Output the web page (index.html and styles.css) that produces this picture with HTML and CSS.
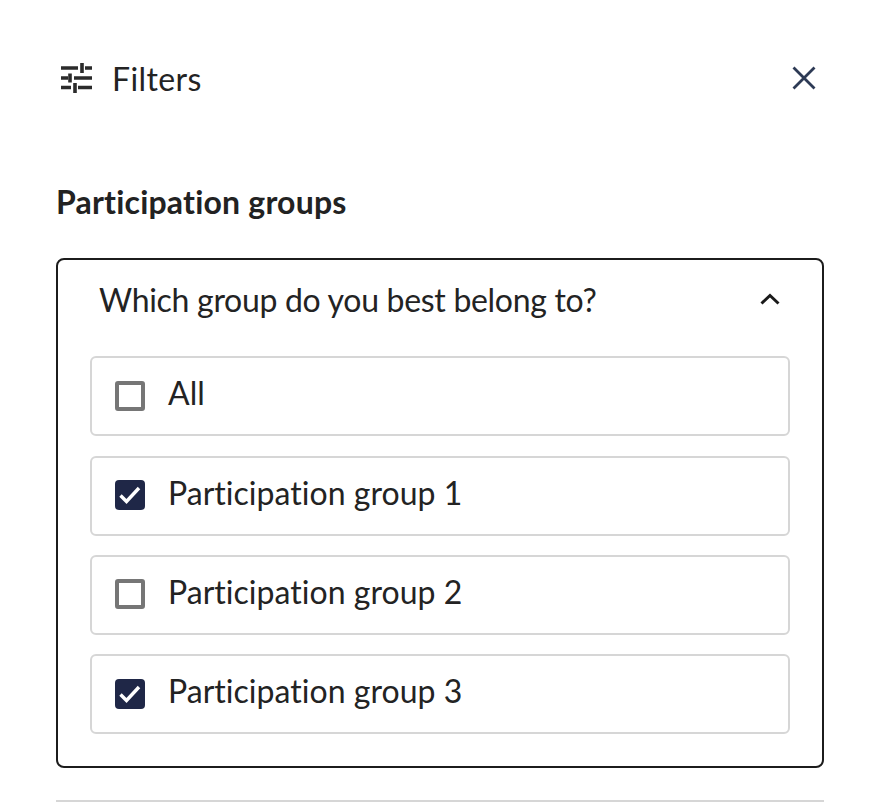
FILE: index.html
```html
<!DOCTYPE html>
<html lang="en">
<head>
<meta charset="utf-8">
<title>Filters</title>
<link rel="stylesheet" href="styles.css">
</head>
<body>
<main class="panel">
  <header class="panel-header">
    <div class="panel-title">
      <svg class="icon-filter" viewBox="0 0 32 32" aria-hidden="true">
        <path d="M1 6H18M25 6H32M22 1V11M1 16H8M14 16H32M10 11.5V20.5M1 25.5H11M18 25.5H32M15 21V31" fill="none" stroke="#2b2b2b" stroke-width="3.6"/>
      </svg>
      <span>Filters</span>
    </div>
    <svg class="icon-close" viewBox="0 0 24 24" aria-hidden="true">
      <path d="M1.5 1.5L22.5 22.5M22.5 1.5L1.5 22.5" fill="none" stroke="#2d3a55" stroke-width="2.8"/>
    </svg>
  </header>
  <h2 class="section-title">Participation groups</h2>
  <section class="accordion">
    <div class="accordion-head">
      <span>Which group do you best belong to?</span>
      <svg class="icon-chevron" viewBox="0 0 20 12" aria-hidden="true">
        <path d="M1.5 10.5L10 2.5L18.5 10.5" fill="none" stroke="#1a1a1a" stroke-width="3"/>
      </svg>
    </div>
    <ul class="options">
      <li class="option"><span class="box"></span><span>All</span></li>
      <li class="option"><span class="box checked"><svg viewBox="0 0 30 30" aria-hidden="true"><path d="M5.5 15.5L11.5 21.5L24 8" fill="none" stroke="#fff" stroke-width="3.4"/></svg></span><span>Participation group 1</span></li>
      <li class="option"><span class="box"></span><span>Participation group 2</span></li>
      <li class="option"><span class="box checked"><svg viewBox="0 0 30 30" aria-hidden="true"><path d="M5.5 15.5L11.5 21.5L24 8" fill="none" stroke="#fff" stroke-width="3.4"/></svg></span><span>Participation group 3</span></li>
    </ul>
  </section>
  <hr class="divider">
</main>
</body>
</html>
```
FILE: styles.css
```css
* { box-sizing: border-box; }
html, body { margin: 0; height: 100%; overflow: hidden; background: #fff; }
body { font-family: Lato, "Open Sans", sans-serif; color: #232323; font-variant-ligatures: none; }
.panel { padding: 62px 60px 0 56px; }
.panel-header { display: flex; justify-content: space-between; align-items: flex-start; height: 32px; }
.panel-title { display: flex; align-items: center; gap: 20px; padding-left: 4px; font-size: 32px; letter-spacing: 0.4px; line-height: 34px; height: 34px; }
.icon-filter { width: 32px; height: 32px; display: block; align-self: flex-start; }
.icon-close { width: 24px; height: 24px; margin: 4px 8px 0 0; display: block; }
.section-title { margin: 90px 0 0; font-size: 32px; letter-spacing: 0.2px; line-height: 36px; font-weight: 700; color: #222; }
.accordion { margin-top: 38px; height: 510px; border: 2px solid #1c1c1c; border-radius: 8px; padding: 0 32px; }
.accordion-head { display: flex; justify-content: space-between; align-items: center; height: 78px; padding: 0 10px 0 9px; font-size: 32px; letter-spacing: -0.3px; }
.icon-chevron { width: 20px; height: 12px; display: block; }
.options { list-style: none; margin: 18.2px 0 0; padding: 0; display: flex; flex-direction: column; gap: 19.35px; }
.option { display: flex; align-items: center; gap: 23px; height: 80px; padding-left: 23px; padding-bottom: 7px; border: 2px solid #d6d6d6; border-radius: 6px; font-size: 32px; letter-spacing: 0.03px; }
.box { width: 30px; height: 30px; flex: none; border: 4px solid #767676; border-radius: 3px; margin-top: 6px; }
.box.checked { background: #1f2747; border: 0; border-radius: 4px; }
.box svg { display: block; width: 30px; height: 30px; }
.divider { margin: 32px 0 0; border: 0; height: 2px; background: #d6d6d6; }
```
